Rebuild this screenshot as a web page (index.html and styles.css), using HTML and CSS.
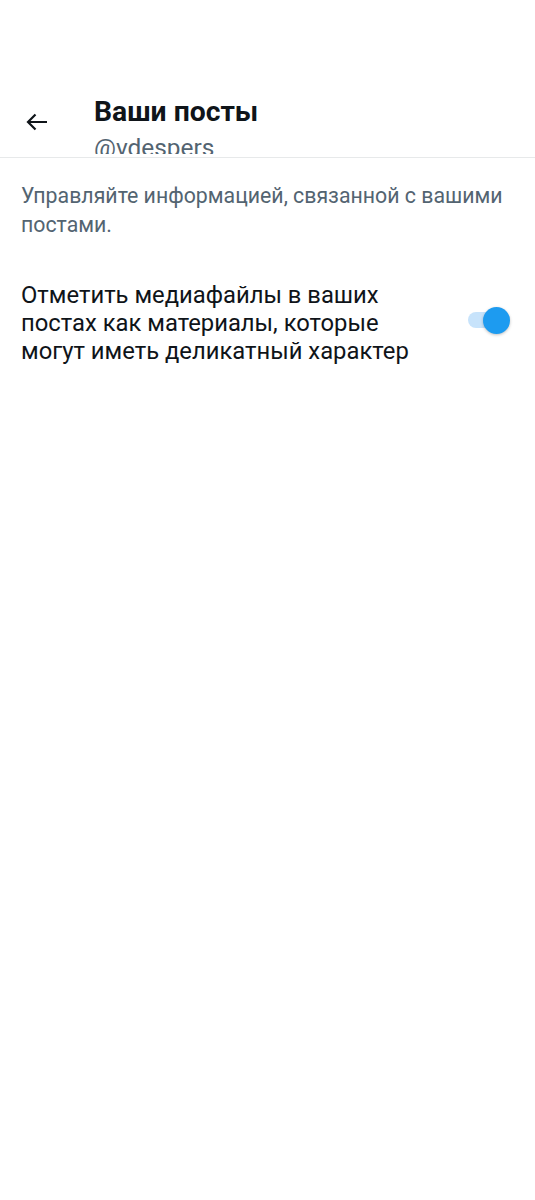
FILE: index.html
```html
<!DOCTYPE html>
<html lang="ru">
<head>
<meta charset="utf-8">
<link rel="stylesheet" href="styles.css">
</head>
<body>
<div class="screen">
  <header class="header">
    <div class="back">
      <svg class="back-icon" viewBox="0 0 22 18" width="22" height="18">
        <path d="M2 9H21M9.5 1.5L2 9l7.5 7.5" fill="none" stroke="#0f1419" stroke-width="2.2" stroke-linejoin="miter"/>
      </svg>
    </div>
    <div class="titles">
      <div class="title">Ваши посты</div>
      <div class="handle">@vdespers</div>
    </div>
  </header>
  <p class="desc">Управляйте информацией, связанной с вашими постами.</p>
  <div class="setting">
    <div class="setting-text">Отметить медиафайлы в ваших постах как материалы, которые могут иметь деликатный характер</div>
    <div class="switch">
      <div class="track"></div>
      <div class="thumb"></div>
    </div>
  </div>
</div>
</body>
</html>
```

FILE: styles.css
```css
html, body {
  margin: 0;
  padding: 0;
  background: #ffffff;
}
body {
  font-family: Roboto, "Noto Sans", sans-serif;
  color: #0f1419;
}
.screen {
  width: 535px;
  min-height: 1200px;
}
.header {
  display: flex;
  align-items: flex-start;
  height: 158px;
  box-sizing: border-box;
  padding-top: 96px;
  border-bottom: 1px solid #e7e9ea;
}
.back {
  width: 94px;
  display: flex;
  padding-left: 26px;
  padding-top: 17px;
  box-sizing: border-box;
}
.back-icon {
  display: block;
}
.titles {
  display: flex;
  flex-direction: column;
  height: 58px;
  overflow: hidden;
}
.title {
  font-size: 28.3px;
  font-weight: 700;
  line-height: 32px;
}
.handle {
  font-size: 24.4px;
  line-height: 28px;
  color: #536471;
  margin-top: 6px;
}
.desc {
  margin: 0;
  padding: 23px 21px 0 21px;
  font-size: 21.3px;
  line-height: 29px;
  color: #536471;
}
.setting {
  display: flex;
  align-items: center;
  justify-content: space-between;
  padding: 42px 25px 0 21px;
}
.setting-text {
  font-size: 23.8px;
  line-height: 28px;
  color: #0f1419;
  max-width: 420px;
}
.switch {
  position: relative;
  width: 42px;
  height: 27px;
  flex-shrink: 0;
  margin-bottom: 6px;
}
.track {
  position: absolute;
  left: 0;
  top: 5px;
  width: 34px;
  height: 16px;
  border-radius: 8px;
  background: #c7e3fb;
}
.thumb {
  position: absolute;
  right: 0;
  top: 0;
  width: 27px;
  height: 27px;
  border-radius: 50%;
  background: #1d9bf0;
  box-shadow: 0 1px 3px rgba(0,0,0,0.25);
}
```
